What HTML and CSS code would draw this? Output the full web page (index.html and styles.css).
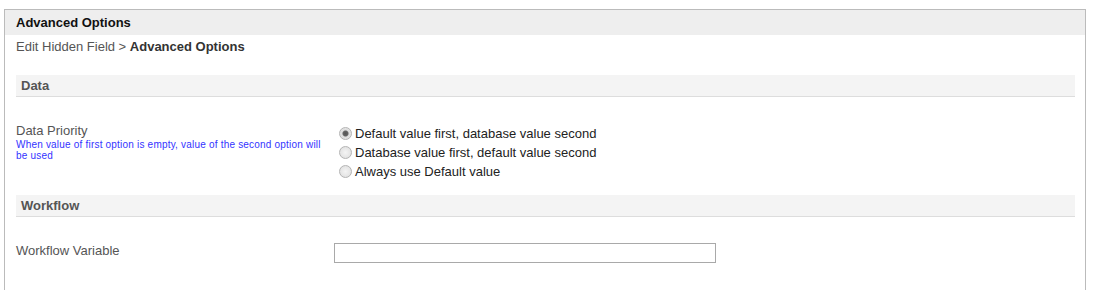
FILE: index.html
```
<!DOCTYPE html>
<html lang="en">
<head>
    <meta charset="UTF-8">
    <title>Advanced Options</title>
    <link rel="stylesheet" href="styles.css">
</head>
<body>
    <div class="panel">
        <div class="panel-header">Advanced Options</div>
        <div class="breadcrumb">Edit Hidden Field &gt; <strong>Advanced Options</strong></div>
        <div class="panel-body">
            <div class="section-title">Data</div>
            <div class="form-row">
                <div class="form-label">
                    Data Priority
                    <div class="form-help">When value of first option is empty, value of the second option will be used</div>
                </div>
                <div class="form-field radio-list">
                    <label class="radio-option"><input type="radio" name="priority" checked> Default value first, database value second</label>
                    <label class="radio-option"><input type="radio" name="priority"> Database value first, default value second</label>
                    <label class="radio-option"><input type="radio" name="priority"> Always use Default value</label>
                </div>
            </div>
            <div class="section-title">Workflow</div>
            <div class="form-row">
                <div class="form-label">Workflow Variable</div>
                <div class="form-field">
                    <input type="text" class="text-input">
                </div>
            </div>
        </div>
    </div>
</body>
</html>
```

FILE: styles.css
```
body {
    margin: 0;
    padding: 9px 9px 0 4px;
    background: #fff;
    font-family: "Liberation Sans", Arial, sans-serif;
    font-size: 13px;
    color: #555;
}

.panel {
    border: 1px solid #bbb;
    border-bottom: none;
    min-height: 280px;
}

.panel-header {
    background: #eee;
    padding: 5px 11px;
    line-height: 15px;
    font-weight: bold;
    color: #111;
}

.breadcrumb {
    padding: 4px 11px 0;
    line-height: 16px;
    color: #555;
}

.breadcrumb strong {
    color: #333;
}

.panel-body {
    padding: 20px 10px 0 11px;
}

.section-title {
    background: #f4f4f4;
    border-bottom: 1px solid #ddd;
    padding: 3px 5px;
    line-height: 15px;
    font-weight: bold;
    color: #555;
}

.form-row {
    display: flex;
    padding: 26px 0 15px;
}

.form-label {
    width: 318px;
    flex-shrink: 0;
    line-height: 16px;
}

.form-help {
    max-width: 310px;
    font-size: 10px;
    line-height: 11px;
    letter-spacing: 0.2px;
    color: #33f;
}

.form-field {
    flex: 1;
}

.radio-list {
    padding-top: 1px;
    margin-bottom: -1px;
}

.radio-option {
    display: flex;
    align-items: center;
    height: 19px;
    color: #222;
}

.radio-option input {
    appearance: none;
    width: 13px;
    height: 13px;
    margin: 0 3px 0 5px;
    border: 1px solid #b4b4b4;
    border-radius: 50%;
    background: radial-gradient(circle, #f4f4f4 0%, #dcdcdc 100%);
}

.radio-option input:checked {
    background: radial-gradient(circle, #555 0, #666 2.5px, #ddd 3.5px, #ececec 100%);
}

.text-input {
    display: block;
    box-sizing: border-box;
    width: 382px;
    height: 20px;
    margin: 0;
    border: 1px solid #a9a9a9;
    font-family: inherit;
}
```
